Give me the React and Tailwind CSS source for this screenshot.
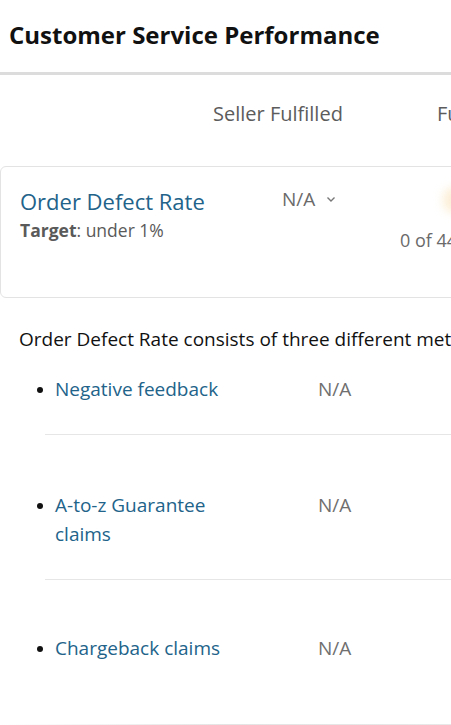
import React from 'react';

const font = { fontFamily: '"Open Sans", "Noto Sans", sans-serif' };

const Row = ({ lines, last }) => (
  <div className={`ml-[45px] ${last ? 'pt-[54px] pb-[61px]' : 'border-b border-[#e6e6e6] pt-[56px] pb-[30px]'}`}>
    <div className="flex -ml-[8px]">
      <div className="w-[281px] flex">
        <span className="w-[18px] shrink-0 flex items-start pt-[12px]">
          <span className="w-[6px] h-[6px] rounded-full bg-[#111]" />
        </span>
        <div className="text-[19px] leading-[29px] text-[#22638a]">
          {lines.map((l) => (
            <div key={l}>{l}</div>
          ))}
        </div>
      </div>
      <div className="text-[19px] leading-[29px] text-[#6f6f6f]">N/A</div>
    </div>
  </div>
);

export default function App() {
  return (
    <div className="w-[451px] h-[725px] overflow-hidden bg-white" style={font}>
      <div className="w-[620px]">
        {/* Header */}
        <div className="h-[75px] border-b-[3px] border-[#dcdcdc] flex items-start pt-[19px] pl-[9px]">
          <h1 className="text-[24px] font-bold text-[#111] leading-[32px]">
            Customer Service Performance
          </h1>
        </div>

        {/* Column headers */}
        <div className="h-[91px] flex pt-[26px]">
          <div className="w-[213px]" />
          <div className="w-[224px] text-[20px] leading-[26px] text-[#5c5c5c]">Seller Fulfilled</div>
          <div className="text-[20px] leading-[26px] text-[#5c5c5c]">Fulfilled by Amazon</div>
        </div>

        {/* Card */}
        <div className="border border-[#e3e3e3] rounded-[6px] h-[132px] flex pt-[19px] pl-[19px] relative">
          <div className="w-[262px]">
            <div className="text-[22px] leading-[30px] text-[#22638a]">Order Defect Rate</div>
            <div className="text-[17.5px] leading-[22px] text-[#5a5a5a] mt-[3px]">
              <span className="font-bold">Target</span>: under 1%
            </div>
          </div>
          <div className="w-[118px]">
            <div className="flex items-center gap-[11px] text-[19px] leading-[26px] text-[#6a6a6a]">
              <span>N/A</span>
              <svg width="10" height="7" viewBox="0 0 10 7" className="mt-[1px]">
                <path d="M1.5 1.5 L5 5 L8.5 1.5" fill="none" stroke="#777" strokeWidth="1.4" />
              </svg>
            </div>
          </div>
          <div className="pt-[42px] text-[18px] leading-[24px] text-[#6a6a6a]">0 of 44 orders</div>
          <div className="absolute left-[442px] top-[20px] w-[22px] h-[26px] rounded-full bg-[#fcefd8] blur-[4px]" />
        </div>

        {/* Description */}
        <p className="pl-[19px] pt-[27px] text-[19px] leading-[28px] text-[#111] whitespace-nowrap">
          Order Defect Rate consists of three different metrics:
        </p>

        <div className="-mt-[34px]">
          <Row lines={['Negative feedback']} />
          <Row lines={['A-to-z Guarantee', 'claims']} />
          <Row lines={['Chargeback claims']} last />
        </div>
        <div className="h-[3px] w-[451px] bg-gradient-to-r from-white via-[#e4e4e4] to-[#e8e8e8]" />
      </div>
    </div>
  );
}
